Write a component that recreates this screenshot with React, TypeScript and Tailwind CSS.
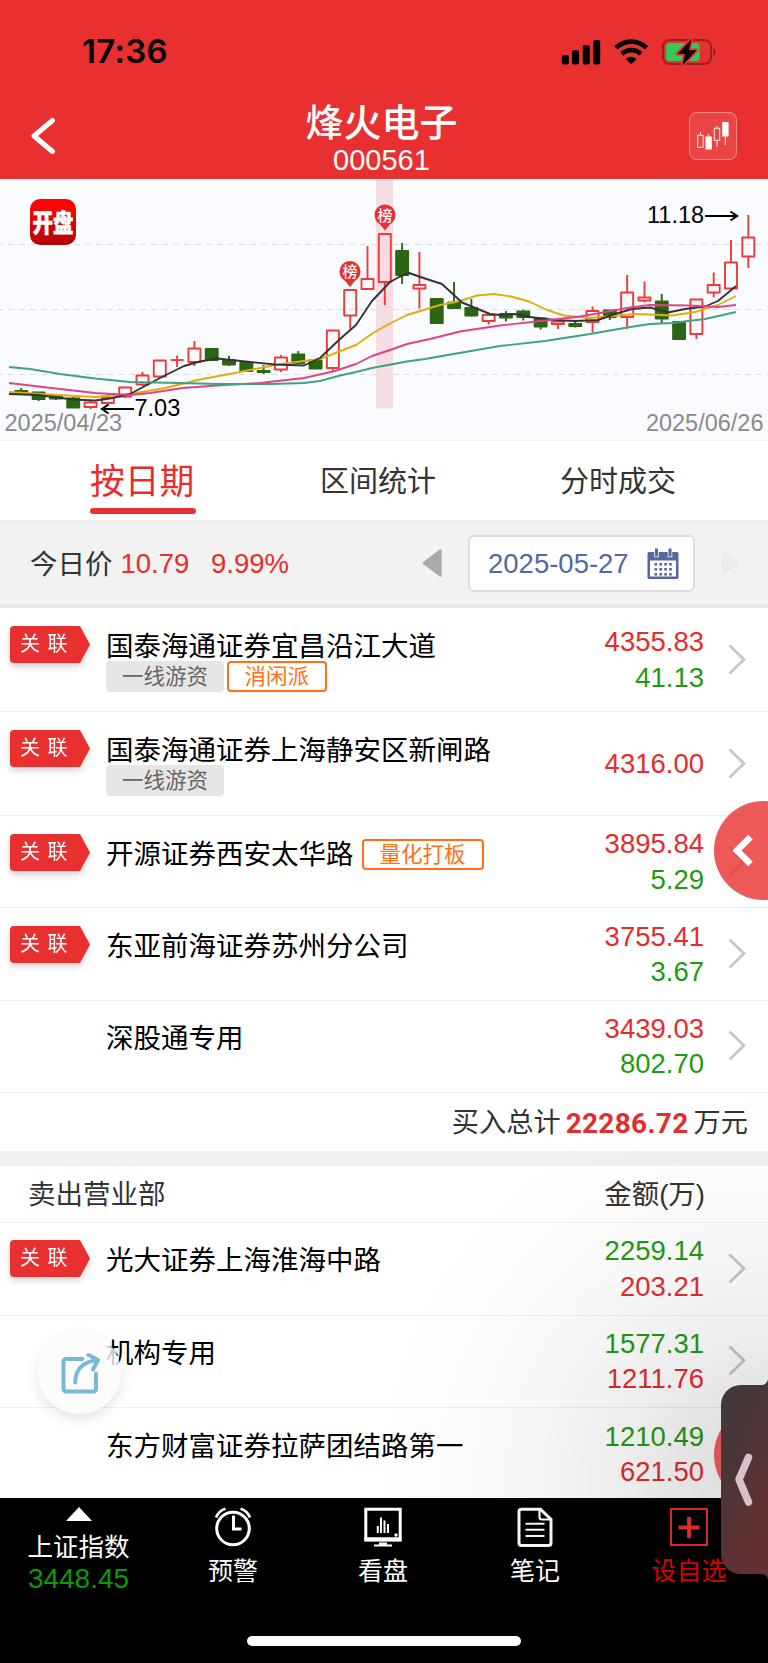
// App.tsx
// Stock "top list" detail page: price chart, date filter, buying and selling branches.

type Branch = {
  name: string;
  linked?: boolean;
  tags?: string[];
  styles?: string[];
  inlineStyle?: string;
  main: string;
  sub?: string;
};

const buyers: Branch[] = [
  { name: '国泰海通证券宜昌沿江大道', linked: true, tags: ['一线游资'], styles: ['消闲派'], main: '4355.83', sub: '41.13' },
  { name: '国泰海通证券上海静安区新闸路', linked: true, tags: ['一线游资'], main: '4316.00' },
  { name: '开源证券西安太华路', linked: true, inlineStyle: '量化打板', main: '3895.84', sub: '5.29' },
  { name: '东亚前海证券苏州分公司', linked: true, main: '3755.41', sub: '3.67' },
  { name: '深股通专用', main: '3439.03', sub: '802.70' },
];

const sellers: Branch[] = [
  { name: '光大证券上海淮海中路', linked: true, main: '2259.14', sub: '203.21' },
  { name: '机构专用', main: '1577.31', sub: '1211.76' },
  { name: '东方财富证券拉萨团结路第一', main: '1210.49', sub: '621.50' },
];

// [up, body top, body bottom, high, low]
const candles: [boolean, number, number, number, number][] = [
  [false, 213, 216, 210, 216],
  [false, 214.5, 221, 214.5, 223],
  [false, 218, 220.5, 216, 222],
  [false, 220.5, 229.5, 219, 229.5],
  [true, 224.5, 229, 222, 231],
  [true, 220, 225, 216, 227],
  [true, 209.5, 218.5, 209.5, 220],
  [true, 197.5, 206.5, 194, 208],
  [true, 182.5, 198.5, 182.5, 200],
  [true, 182, 182, 177.5, 189],
  [true, 170.5, 184, 163, 188],
  [false, 171, 182, 170.5, 182],
  [false, 182, 186.5, 178, 188],
  [false, 185, 193, 185, 193],
  [false, 193, 194, 187, 196],
  [true, 179.5, 191.5, 177, 194],
  [false, 176.5, 185, 173, 186],
  [false, 182.5, 190.5, 182, 190.5],
  [true, 152.5, 190, 152.5, 193.5],
  [true, 112, 137.5, 112, 151],
  [true, 101, 111, 68, 111],
  [true, 56, 104, 56, 127],
  [false, 73, 97, 65, 106],
  [true, 107, 110.5, 74, 130.5],
  [false, 121, 145, 120, 145],
  [false, 124.5, 130, 104, 130.5],
  [false, 130, 137.5, 121, 138.5],
  [true, 137, 143, 137, 146.5],
  [false, 136, 139.5, 133, 143.5],
  [false, 133.5, 139, 131.5, 142.5],
  [false, 140.5, 148.5, 140, 151.5],
  [true, 143.5, 146, 143, 151],
  [false, 146, 148, 142, 149.5],
  [true, 133, 144, 128.5, 154.5],
  [false, 132.5, 139, 132, 142],
  [true, 114.5, 139, 97, 151],
  [true, 119.5, 122.5, 103.5, 124.5],
  [false, 123.5, 140.5, 116, 145.5],
  [false, 144, 161, 144, 161],
  [true, 121.5, 156, 121.5, 161],
  [true, 107, 114.5, 94.5, 119.5],
  [true, 84.5, 110.5, 62, 110.5],
  [true, 59.5, 78.5, 37, 90],
];

const averages = [
  {
    color: '#dfae0c',
    points:
      '9,214 50,216.5 95,219 130,216 165,210 200,201.5 240,194 275,187 300,183.5 320,181 338,174 356,167 373,155 390,145.5 407,137 440,127 460,123 477,117.5 494,116 511,118.5 529,123.5 547,132 564,137.5 590,140 612,138 635,136 650,136.5 672,137.5 695,134 718,127 736,118',
  },
  {
    color: '#333333',
    points:
      '9,216 38,217 73,221.5 95,222.5 110,220.5 130,216 160,200 184,188 200,183.5 217,180.5 250,184 275,186.5 304,187.5 320,180 340,161 356,147 372,123 390,104 400,98.5 409,95 425,100.5 442,106 462,124.5 490,136 500,137 515,136 530,139 555,142 575,143 598,142 615,136 632,131 650,129.5 668,134.5 685,131 705,128.5 718,123 736,108',
  },
  {
    color: '#dd4488',
    points:
      '9,205 60,211 95,215 130,217 150,215 183,210 217,207.5 260,205 304,200 335,193 356,186 372,178 390,172 407,166 430,161 460,153.5 500,147.5 550,142 580,138.5 600,135 630,129.5 650,127 690,127.5 718,129 736,127',
  },
  {
    color: '#3fa283',
    points:
      '9,189 30,191 60,196 95,200.5 130,204 180,205 217,206 270,206 304,205 320,203 340,197.5 356,194 372,190 407,183.5 425,181 442,178 500,168 545,163 590,156 630,149 650,146 672,145 705,141 736,134',
  },
];

function StatusBar() {
  return (
    <div className="flex h-[100px] items-center justify-between pl-[82px] pr-[51px] pt-[3px]">
      <span className="font-['Inter'] text-[33px] font-semibold leading-none tracking-[0.3px] text-black">17:36</span>
      <svg className="h-[28px] w-[156px]" viewBox="561 37 156 28">
        <rect x="561.8" y="54" width="7" height="9.5" rx="2" />
        <rect x="572" y="49.3" width="7" height="14.2" rx="2" />
        <rect x="582.8" y="44" width="7" height="19.5" rx="2" />
        <rect x="593.2" y="39" width="7" height="24.5" rx="2" />
        <path d="M616 46.8a22 22 0 0 1 30.500 0M621.800 53a13.500 13.500 0 0 1 19 0" fill="none" stroke="#000" strokeWidth="4.600" />
        <path d="M631.2 63.2l-5.300-5.300a7.600 7.600 0 0 1 10.600 0z" />
        <rect x="663" y="39" width="48" height="24" rx="6.500" fill="none" stroke="#94201f" strokeWidth="2" />
        <path d="M713.300 47.200a4.600 4.600 0 0 1 0 8z" fill="#94201f" />
        <rect x="666" y="42" width="33.500" height="18" rx="3.500" fill="#34c759" />
        <path
          d="M691.500 38.200l-14 14.800h7.500l-2.500 11.200 14-15h-7.800z"
          stroke="#e83030"
          strokeWidth="3.500"
          paintOrder="stroke"
          strokeLinejoin="round"
        />
      </svg>
    </div>
  );
}

function Header() {
  return (
    <header className="h-[179px] bg-[#e83030]">
      <StatusBar />
      <div className="flex h-[79px] items-start justify-between pl-[30px] pr-[31px]">
        <svg className="mt-[17px] h-[38px] w-[48px]" viewBox="0 0 48 38" fill="none">
          <path d="M22.500 3.500L4 19l18.500 15.500" stroke="#fff" strokeWidth="5" strokeLinecap="round" strokeLinejoin="round" />
        </svg>
        <div className="flex flex-col items-center pr-[4px] text-white">
          <h1 className="mt-[2px] text-[38px] font-medium leading-[42px]">烽火电子</h1>
          <p className="text-[29px] leading-[32px]">000561</p>
        </div>
        <svg className="mt-[12px] h-[48px] w-[48px]" viewBox="0 0 48 48">
          <rect x="0.500" y="0.500" width="47" height="47" rx="7" fill="#fff" fillOpacity="0.100" stroke="#fff" strokeOpacity="0.400" />
          <g fill="none" stroke="#fff" strokeOpacity="0.850">
            <path d="M11.500 20v3M19.700 22v3M28 14v2M28 28v7M36.300 24v9" />
            <rect x="8.700" y="23.300" width="5.400" height="12" />
            <rect x="25.300" y="16.300" width="5.400" height="12" />
          </g>
          <rect x="16.500" y="24.500" width="6.400" height="13" fill="#fff" />
          <rect x="33.200" y="10" width="6.400" height="14.500" fill="#fff" />
        </svg>
      </div>
    </header>
  );
}

function ListPin({ x, y }: { x: number; y: number }) {
  return (
    <g transform={`translate(${x} ${y})`}>
      <circle r="10.500" fill="#e83030" />
      <path d="M-6 8L0 15.500L6 8z" fill="#e83030" />
      <text y="5.500" fill="#fff" fontSize="15" fontWeight="500" textAnchor="middle">
        榜
      </text>
    </g>
  );
}

function PriceChart() {
  return (
    <svg className="block h-[261px] w-full bg-[#fafbff]" viewBox="0 1 768 261">
      <defs>
        <linearGradient id="logo" x1="0" y1="0" x2="0" y2="1">
          <stop offset="0.200" stopColor="#fb0505" />
          <stop offset="1" stopColor="#b00508" />
        </linearGradient>
      </defs>
      {[66.5, 131.5, 196.5].map((y) => (
        <line key={y} x1="-3" x2="768" y1={y} y2={y} stroke="#dcdde2" strokeDasharray="6 5" />
      ))}
      <rect x="376" y="2" width="17" height="228.500" fill="#f6dde3" />
      {candles.map(([up, top, bottom, high, low], i) => {
        const x = 21.3 + i * 17.31;
        const color = up ? '#ee3a3a' : '#2b6613';
        return (
          <g key={i} stroke={color} strokeWidth="1.900">
            <line x1={x} x2={x} y1={high} y2={top} />
            <line x1={x} x2={x} y1={bottom} y2={low} />
            {bottom > top ? (
              <rect x={x - 6} y={top} width="12" height={bottom - top} fill={up ? 'none' : color} strokeLinejoin="round" />
            ) : (
              <line x1={x - 6.5} x2={x + 6.5} y1={top} y2={top} />
            )}
          </g>
        );
      })}
      {averages.map((line) => (
        <polyline key={line.color} points={line.points} fill="none" stroke={line.color} strokeWidth="1.900" strokeLinejoin="round" />
      ))}
      <ListPin x={350} y={93.5} />
      <ListPin x={385} y={37} />
      <rect x="30" y="21" width="46" height="46" rx="10" fill="url(#logo)" />
      <text
        x="32.500"
        y="53.500"
        fill="#fff"
        stroke="#fff"
        strokeWidth="0.600"
        fontSize="25"
        fontWeight="900"
        textLength="41"
        lengthAdjust="spacingAndGlyphs"
      >
        开盘
      </text>
      <g fill="none" stroke="#000" strokeWidth="2.100">
        <path d="M134 231H102M108.500 226.500L102 231l6.500 4.500" />
        <path d="M705 38h32M730.500 33.500L737 38l-6.500 4.500" />
      </g>
      <g fontSize="23.500">
        <text x="134.500" y="238">7.03</text>
        <text x="647" y="45">11.18</text>
        <g fill="#8a8a8a">
          <text x="4.500" y="253">2025/04/23</text>
          <text x="763.500" y="253" textAnchor="end">2025/06/26</text>
        </g>
      </g>
    </svg>
  );
}

function Tabs() {
  return (
    <div className="flex h-[80px] items-start justify-between border-t border-[#f2f2f2] bg-white pl-[90px] pr-[92px] text-[29px] text-[#333]">
      <div className="flex w-[106px] flex-col items-start">
        <span className="mt-[16px] text-[34.800px] leading-[50px] text-[#e82c2c]">按日期</span>
        <div className="mt-[1px] h-[6px] w-[106px] rounded-full bg-[#e83030]" />
      </div>
      <span className="mt-[16px] leading-[50px]">区间统计</span>
      <span className="mt-[16px] leading-[50px]">分时成交</span>
    </div>
  );
}

function DateFilter() {
  return (
    <div className="flex h-[88px] items-center border-b-4 border-t-2 border-b-[#e7e7e7] border-t-[#ededed] bg-[#f2f2f2] pl-[30px] text-[27.500px] text-[#e82c2c]">
      <span className="pt-[3px] text-[#333]">今日价</span>
      <span className="ml-[8px] w-[90.500px] pt-[2px]">10.79</span>
      <span className="pt-[2px]">9.99%</span>
      <svg className="ml-auto h-[28px] w-[21px]" viewBox="0 0 21 28">
        <path d="M18.500 1.500v25L2 14z" fill="#aaa" stroke="#aaa" strokeWidth="2.500" strokeLinejoin="round" />
      </svg>
      <div className="ml-[25px] flex h-[57px] w-[227px] items-center rounded-md border-2 border-[#dcdcdc] bg-white pl-[18px] text-[#5468a0]">
        <span className="pt-[2px]">2025-05-27</span>
        <svg className="ml-[18px] h-[31px] w-[32px]" viewBox="0 0 32 31" fill="#5468a0">
          <path d="M2 4h28a1.500 1.500 0 0 1 1.500 1.500v24A1.500 1.500 0 0 1 30 31H2a1.500 1.500 0 0 1-1.500-1.500v-24A1.500 1.500 0 0 1 2 4z" />
          <rect x="3" y="12.500" width="26" height="16" fill="#fff" />
          <path d="M8 0.500h3v8H8zM21.500 0.500h3v8h-3z" stroke="#fff" strokeWidth="1.500" paintOrder="stroke" />
          {[15, 20, 25].map((y) =>
            [7.5, 12.4, 17.3, 22.2].map((x) => <rect key={`${x}-${y}`} x={x} y={y} width="2.600" height="2.600" />)
          )}
        </svg>
      </div>
      <svg className="ml-[25px] mr-[27px] h-[28px] w-[21px]" viewBox="0 0 21 28">
        <path d="M1.500 1v26L20.500 14z" fill="#ebebeb" />
      </svg>
    </div>
  );
}

function LinkedBadge() {
  return (
    <div className="mt-[17.500px] flex h-[37px] drop-shadow-[0_4px_3px_rgba(0,0,0,0.16)]">
      <div className="w-[70px] rounded-l-[4px] bg-[#e83030] pl-[10px] text-[20px] leading-[37px] tracking-[7.500px] text-white">
        关联
      </div>
      <svg className="h-[37px] w-[10px]" viewBox="0 0 10 37">
        <path d="M0 0L10 18.500L0 37z" fill="#e83030" />
      </svg>
    </div>
  );
}

function StyleTag({ label }: { label: string }) {
  return (
    <span className="flex h-[31px] items-center rounded-[4px] border-2 border-[#fd7015] px-[16px] pt-px text-[21.500px] leading-[28px] text-[#fd7015]">
      {label}
    </span>
  );
}

function BranchRow({ branch, selling }: { branch: Branch; selling?: boolean }) {
  const tall = branch.tags !== undefined;
  return (
    <div className={`flex shrink-0 border-b border-[#efefef] ${tall ? 'h-[104px]' : selling ? 'h-[92.700px]' : 'h-[92.300px]'}`}>
      <div className="w-[106px] pl-[10px]">{branch.linked && <LinkedBadge />}</div>
      <div className="pt-[20.500px]">
        <div className="flex h-[35px] items-center gap-[8px]">
          <span className="text-[27.500px] leading-[35px] text-black">{branch.name}</span>
          {branch.inlineStyle && <StyleTag label={branch.inlineStyle} />}
        </div>
        {tall && (
          <div className="mt-[-2.500px] flex gap-[2.500px]">
            {branch.tags?.map((tag) => (
              <span key={tag} className="h-[31px] rounded-[4px] bg-[#e6e6e6] px-[16px] text-[21.500px] leading-[32px] text-[#666]">
                {tag}
              </span>
            ))}
            {branch.styles?.map((label) => <StyleTag key={label} label={label} />)}
          </div>
        )}
      </div>
      <div className="ml-auto flex flex-col justify-center text-right text-[27.500px] leading-[35.300px]">
        <span className={selling ? 'text-[#1f9b12]' : 'text-[#e32d2d]'}>{branch.main}</span>
        {branch.sub && <span className={selling ? 'text-[#e32d2d]' : 'text-[#1f9b12]'}>{branch.sub}</span>}
      </div>
      <svg className="ml-[24px] mr-[21px] h-[32px] w-[19px] self-center" viewBox="0 0 19 32" fill="none">
        <path d="M1.500 1.500L16 15.500L1.500 29.500" stroke="#c6c6c6" strokeWidth="2.700" />
      </svg>
    </div>
  );
}

function BottomNav() {
  return (
    <nav className="h-[165px] bg-black text-[25px] leading-[36px] text-white">
      <div className="flex h-[138px]">
        <div className="flex w-[157px] flex-col items-center">
          <svg className="mt-[9px] h-[14px] w-[26px]" viewBox="0 0 26 14">
            <path d="M13 0L26 14H0z" fill="#fff" />
          </svg>
          <span className="mt-[8px] text-[25.500px]">上证指数</span>
          <span className="mt-[-4px] text-[28px] text-[#0a9a0a]">3448.45</span>
        </div>
        <div className="flex w-[152px] flex-col items-center">
          <svg className="mt-[9px] h-[40px] w-[40px]" viewBox="0 0 40 40" fill="none" stroke="#fff">
            <circle cx="20" cy="21.500" r="16.300" strokeWidth="3" />
            <path d="M20.500 8.500v13.500h8" strokeWidth="2.900" />
            <path d="M3 10.500C5 6 8 3 12.500 1.800M37 10.500C35 6 32 3 27.500 1.800" strokeWidth="2.700" />
          </svg>
          <span className="mt-[6px]">预警</span>
        </div>
        <div className="flex w-[148px] flex-col items-center">
          <svg className="mt-[9px] h-[40px] w-[40px]" viewBox="0 0 40 40" fill="none" stroke="#fff">
            <path d="M2.800 2.200h34.400v30.500H2.800z" strokeWidth="3" />
            <path d="M1.500 32.300h37" strokeWidth="4.300" />
            <path d="M14.800 26v-7M18 26V10.500M21.500 26V13.500M25 26v-9" strokeWidth="2" />
            <circle cx="33" cy="28" r="1" strokeWidth="1.500" fill="#fff" />
            <path d="M16 36.500h8M11 38.500h18" strokeWidth="2.200" />
          </svg>
          <span className="mt-[6px]">看盘</span>
        </div>
        <div className="flex w-[156px] flex-col items-center">
          <svg className="mt-[9px] h-[40px] w-[40px]" viewBox="0 0 40 40" fill="none" stroke="#f5f5f5">
            <path d="M7 2.300h18.500L36 12.500V36a2.500 2.500 0 0 1-2.500 2.500H6.500A2.500 2.500 0 0 1 4 36V4.800A2.500 2.500 0 0 1 6.500 2.300z" strokeWidth="3" />
            <path d="M24.500 2.500V10a2.500 2.500 0 0 0 2.500 2.500h8.500" strokeWidth="2.200" />
            <path d="M10.500 16.700h19M10.500 22.700h19M10.500 29h19" strokeWidth="2" />
          </svg>
          <span className="mt-[6px]">笔记</span>
        </div>
        <div className="flex w-[152px] flex-col items-center text-[#d90000]">
          <svg className="mt-[9px] h-[40px] w-[40px]" viewBox="0 0 40 40" fill="none" stroke="#e02a2a">
            <rect x="2" y="2" width="36" height="36" strokeWidth="1.900" />
            <path d="M9.500 20.500h21M20 10v21" strokeWidth="3.800" />
          </svg>
          <span className="mt-[6px]">设自选</span>
        </div>
      </div>
      <div className="mx-auto h-[10px] w-[274px] rounded-full bg-white" />
    </nav>
  );
}

// Controls that float over the list
function FloatingControls() {
  return (
    <>
      <div className="pointer-events-none absolute right-0 top-[1098px] h-[400px] w-[420px] bg-[radial-gradient(circle_at_100%_96%,rgba(0,0,0,0.14)_0,rgba(0,0,0,0.12)_60px,rgba(0,0,0,0.07)_150px,rgba(0,0,0,0.03)_240px,rgba(0,0,0,0.01)_320px,rgba(0,0,0,0)_400px)]" />
      <div className="absolute left-[38px] top-[1331px] flex h-[83px] w-[83px] items-center justify-center rounded-full bg-[#fbfbfb]/80 shadow-[0_5px_14px_rgba(0,0,0,0.11)]">
        <svg className="h-[42px] w-[40px]" viewBox="60 1349 40 42" fill="none" stroke="#7ab8d8" strokeWidth="4" strokeLinecap="round" strokeLinejoin="round">
          <path d="M82.500 1356H66a2.500 2.500 0 0 0-2.500 2.500V1386a2.500 2.500 0 0 0 2.500 2.500h27.500a2.500 2.500 0 0 0 2.500-2.500V1370.500" />
          <path d="M75.200 1379.500c0-13 8-21 22.500-22.500M88.500 1352l9.500 5-5 9.500" />
        </svg>
      </div>
      <svg className="absolute right-0 top-[800px] h-[101px] w-[55px]" viewBox="713 800 55 101">
        <circle cx="763.500" cy="850.500" r="49.500" fill="#e83030" fillOpacity="0.800" />
        <path d="M750.500 837L737 850.500l13.500 13.500" fill="none" stroke="#fff" strokeWidth="6.500" />
      </svg>
      <svg className="absolute right-0 top-[1375px] h-[210px] w-[55px]" viewBox="713 1375 55 210">
        <defs>
          <linearGradient id="handle" x1="0" y1="0" x2="0.500" y2="1">
            <stop offset="0" stopColor="#40383b" />
            <stop offset="0.400" stopColor="#493537" />
            <stop offset="1" stopColor="#663033" />
          </linearGradient>
        </defs>
        <circle cx="763.500" cy="1455" r="49.500" fill="#dc5555" />
        <path
          d="M768 1379.500q-1.500 5.500-7 5.500h-20a20 20 0 0 0-20 20v149a20 20 0 0 0 20 20h20q5.500 0 7 5.500z"
          fill="url(#handle)"
        />
        <path d="M748.500 1457.500L739 1479.500l9.500 22.500" fill="none" stroke="#dbc0ca" strokeWidth="7.500" strokeLinecap="round" strokeLinejoin="round" />
      </svg>
    </>
  );
}

export default function App() {
  return (
    <div className="relative flex h-[1663px] w-[768px] flex-col overflow-hidden bg-white font-['Liberation_Sans','Noto_Sans_CJK_SC',sans-serif]">
      <Header />
      <PriceChart />
      <Tabs />
      <DateFilter />
      <main className="flex h-[890px] flex-col overflow-hidden">
        {buyers.map((branch) => (
          <BranchRow key={branch.name} branch={branch} />
        ))}
        <div className="flex h-[58px] shrink-0 items-center justify-end pr-[20px] pt-[4px] text-[27.200px] text-[#333]">
          <span>买入总计</span>
          <span className="mx-[5px] font-['Roboto'] text-[28px] font-bold tracking-[0.3px] text-[#e32d2d]">22286.72</span>
          <span>万元</span>
        </div>
        <div className="h-[15px] shrink-0 bg-[#f1f1f1]" />
        <div className="flex h-[57px] shrink-0 items-center justify-between border-b border-[#efefef] pl-[28px] pr-[63px] pt-px text-[27.500px] text-[#333]">
          <span>卖出营业部</span>
          <span>金额(万)</span>
        </div>
        {sellers.map((branch) => (
          <BranchRow key={branch.name} branch={branch} selling />
        ))}
      </main>
      <BottomNav />
      <FloatingControls />
    </div>
  );
}
